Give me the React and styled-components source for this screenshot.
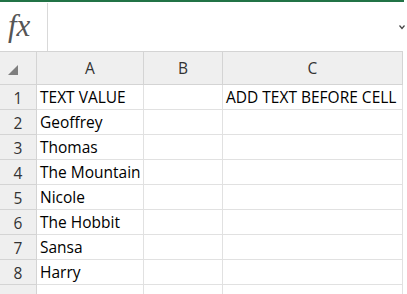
import styled, { createGlobalStyle } from 'styled-components';

const Global = createGlobalStyle`
	body {
		margin: 0;
		background: #fff;
		font-family: 'Open Sans', 'Noto Sans', sans-serif;
	}
`;

const Page = styled.div`
	width: 407px;
	height: 294px;
	overflow: hidden;
	background: #fff;
`;

const TopLine = styled.div`
	width: 404px;
	height: 2px;
	background: #217346;
`;

const FormulaBar = styled.div`
	display: flex;
	height: 49px;
	padding-top: 1px;
	box-sizing: border-box;
`;

const FxBox = styled.div`
	width: 48px;
	box-sizing: border-box;
	border-right: 1px solid #d9d9d9;
	display: flex;
	align-items: center;
	padding: 0 0 2px 8px;
	font-family: 'Liberation Serif', 'DejaVu Serif', serif;
	font-style: italic;
	font-size: 31px;
	color: #555;
`;

const FormulaInput = styled.div`
	flex: 1;
	display: flex;
	justify-content: flex-end;
	align-items: flex-start;
	padding: 22px 2px 0 0;
`;

const Grid = styled.div`
	display: grid;
	grid-template-columns: 37px 107px 79px 180px;
	grid-auto-rows: 25px;
	grid-template-rows: 33px;
	border-top: 1px solid #d4d4d4;
	width: 403px;
`;

const Cell = styled.div`
	box-sizing: border-box;
	border-right: 1px solid #e1e1e1;
	border-bottom: 1px solid #e1e1e1;
	display: flex;
	align-items: center;
	padding-left: 3px;
	font-size: 15.5px;
	color: #000;
	white-space: nowrap;
	overflow: ${({ spill }) => (spill ? 'visible' : 'hidden')};
`;

const HeadCell = styled.div`
	box-sizing: border-box;
	background: #efefef;
	border-right: 1px solid #d4d4d4;
	border-bottom: 1px solid #d4d4d4;
	display: flex;
	align-items: center;
	justify-content: center;
	font-size: 15.5px;
	color: #333;
`;

const Corner = styled(HeadCell)`
	align-items: flex-end;
	justify-content: flex-start;
	padding: 0 0 9px 8px;
`;

const RowNum = styled(HeadCell)`
	padding-top: 1px;
`;

const rows = [
	['TEXT VALUE', '', 'ADD TEXT BEFORE CELL'],
	['Geoffrey', '', ''],
	['Thomas', '', ''],
	['The Mountain', '', ''],
	['Nicole', '', ''],
	['The Hobbit', '', ''],
	['Sansa', '', ''],
	['Harry', '', ''],
	['', '', ''],
];

export default function App() {
	return (
		<Page>
			<Global />
			<TopLine />
			<FormulaBar>
				<FxBox>fx</FxBox>
				<FormulaInput>
					<svg width="6" height="5" viewBox="0 0 6 5">
						<polyline points="0.5,0.5 3,3.5 5.5,0.5" fill="none" stroke="#444" strokeWidth="1.2" />
					</svg>
				</FormulaInput>
			</FormulaBar>
			<Grid>
				<Corner>
					<svg width="10" height="10" viewBox="0 0 10 10">
						<polygon points="10,0 10,10 0,10" fill="#7f7f7f" />
					</svg>
				</Corner>
				<HeadCell>A</HeadCell>
				<HeadCell>B</HeadCell>
				<HeadCell>C</HeadCell>
				{rows.map((r, i) => [
					<RowNum key={`n${i}`}>{i < 8 ? i + 1 : ''}</RowNum>,
					<Cell key={`a${i}`} spill={r[0] === 'The Mountain'}>{r[0]}</Cell>,
					<Cell key={`b${i}`}>{r[1]}</Cell>,
					<Cell key={`c${i}`}>{r[2]}</Cell>,
				])}
			</Grid>
		</Page>
	);
}
